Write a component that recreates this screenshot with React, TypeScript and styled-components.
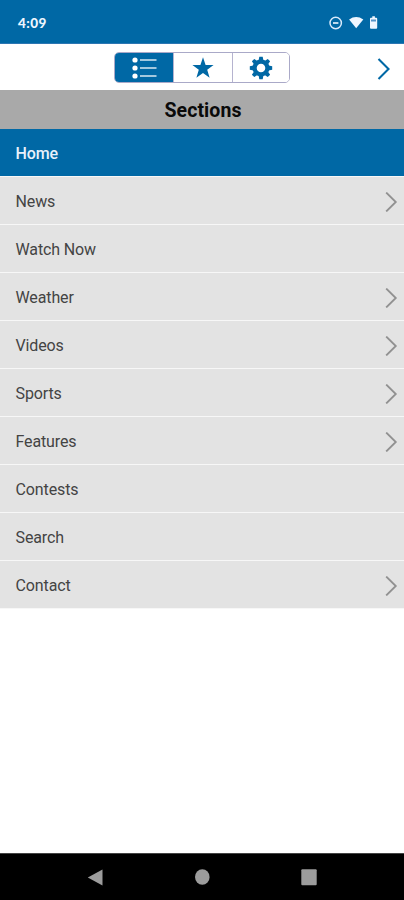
import React from "react";
import styled, { createGlobalStyle, css } from "styled-components";

const BLUE = "#0068a5";

const GlobalStyle = createGlobalStyle`
  *, *::before, *::after { box-sizing: border-box; }
  body { margin: 0; background: #fff; font-family: Roboto, sans-serif; }
  button { font: inherit; border: 0; padding: 0; background: none; }
  svg { display: block; }
`;

const Screen = styled.div`
  display: flex;
  flex-direction: column;
  width: 404px;
  height: 900px;
  background: #fff;
  overflow: hidden;
`;

const StatusBar = styled.header`
  flex: none;
  display: flex;
  align-items: center;
  justify-content: space-between;
  height: 44px;
  padding: 3px 25px 0 18px;
  background: ${BLUE};
  border-bottom: 1px solid #2c76b2;
`;

const Clock = styled.span`
  font: 900 13.5px/16px Lato, sans-serif;
  letter-spacing: 0.45px;
  color: #eef6ff;
`;

const Toolbar = styled.nav`
  flex: none;
  display: grid;
  grid-template-columns: 1fr 176px 1fr;
  align-items: center;
  height: 46px;
`;

const Segments = styled.div`
  grid-column: 2;
  display: grid;
  grid-template-columns: 58px 59px 57px;
  height: 31px;
  border: 1px solid #aaa9c8;
  border-radius: 5px;
  overflow: hidden;
`;

const Segment = styled.button<{ $active?: boolean }>`
  display: flex;
  align-items: center;
  justify-content: center;
  padding-top: 1px;
  color: ${(p) => (p.$active ? "#fff" : BLUE)};
  background: ${(p) => (p.$active ? BLUE : "#fff")};
  & + & { border-left: 1px solid #b5b3cf; }
`;

const NextButton = styled.button`
  justify-self: end;
  margin: 3px 14px 0 0;
  color: ${BLUE};
`;

const Heading = styled.h1`
  flex: none;
  margin: 0;
  height: 39px;
  padding-top: 1px;
  background: #a9a9a9;
  color: #0a0a0a;
  font-size: 19.5px;
  font-weight: 700;
  line-height: 40px;
  letter-spacing: 0.1px;
  text-align: center;
  padding-left: 2px;
`;

const List = styled.ul`
  flex: 1;
  margin: 0;
  padding: 0;
  list-style: none;
`;

const Row = styled.li<{ $active?: boolean }>`
  display: flex;
  align-items: center;
  justify-content: space-between;
  height: 48px;
  padding: 2px 6px 0 15.5px;
  border-bottom: 1px solid #f7f7f7;
  background: #e3e3e3;
  color: #444;
  font-size: 16px;
  letter-spacing: -0.12px;
  ${(p) =>
    p.$active &&
    css`
      background: ${BLUE};
      color: #e8f1fb;
      font-weight: 500;
      letter-spacing: -0.1px;
    `}
`;

const SystemNav = styled.footer`
  flex: none;
  display: flex;
  align-items: center;
  justify-content: space-between;
  height: 47px;
  padding: 0 87px;
  background: #000;
  border-top: 1px solid #444;
  color: #9c9c9c;
`;

const StatusIcons = () => (
  <svg width="50" height="16" viewBox="0 0 50 16" fill="#eef6ff">
    <circle cx="6.7" cy="8" r="5.7" fill="none" stroke="#d8eafb" strokeWidth="1.5" />
    <path d="M4 7.2h5.4v1.6H4z" />
    <path d="M20.1 4.4Q27.2-.4 34.3 4.4L27.2 13.3Z" />
    <path d="M42 2.7h1.3V1.3h2.6v1.4h1.3q1 0 1 1v9q0 1-1 1H42q-1 0-1-1v-9q0-1 1-1Z" />
    <path d="M42 4.5h5v2h-5z" fill="#5795c8" />
  </svg>
);

const ListIcon = () => (
  <svg width="26" height="22" viewBox="0 0 26 22" fill="currentColor">
    {[3, 11, 19].map((y) => (
      <g key={y}>
        <circle cx="4" cy={y} r="2.6" />
        <path d={`M9 ${y - 0.7}h16.5v1.4H9z`} opacity=".85" />
      </g>
    ))}
  </svg>
);

const StarIcon = () => (
  <svg width="22" height="22" viewBox="0 0 22 22" fill="currentColor">
    <path d="M11 .2l2.6 7.7 8 .1-6.4 4.8 2.4 8L11 16l-6.6 4.8 2.4-8L.4 8l8-.1Z" />
  </svg>
);

const GearIcon = () => (
  <svg width="24" height="24" viewBox="-12 -12 24 24" fill="currentColor">
    <circle r="6.4" fill="none" stroke="currentColor" strokeWidth="4.2" />
    {[0, 45, 90, 135, 180, 225, 270, 315].map((angle) => (
      <path key={angle} d="M-2.4-7.6L-1.7-11.2H1.7L2.4-7.6Z" transform={`rotate(${angle})`} />
    ))}
  </svg>
);

const Chevron = ({ large }: { large?: boolean }) =>
  large ? (
    <svg width="13" height="22" viewBox="0 0 13 22" fill="none" stroke="currentColor" strokeWidth="2.1">
      <path d="M1.5 1L11.5 11L1.5 21" />
    </svg>
  ) : (
    <svg width="13" height="20" viewBox="0 0 13 20" fill="none" stroke="#919191" strokeWidth="1.8">
      <path d="M1.2 .5L10.8 10L1.2 19.5" />
    </svg>
  );

const sections = [
  { name: "Home", active: true },
  { name: "News", more: true },
  { name: "Watch Now" },
  { name: "Weather", more: true },
  { name: "Videos", more: true },
  { name: "Sports", more: true },
  { name: "Features", more: true },
  { name: "Contests" },
  { name: "Search" },
  { name: "Contact", more: true },
];

export default function App() {
  return (
    <>
      <GlobalStyle />
      <Screen>
        <StatusBar>
          <Clock>4:09</Clock>
          <StatusIcons />
        </StatusBar>
        <Toolbar>
          <Segments>
            <Segment $active aria-label="Sections"><ListIcon /></Segment>
            <Segment aria-label="Favorites"><StarIcon /></Segment>
            <Segment aria-label="Settings"><GearIcon /></Segment>
          </Segments>
          <NextButton aria-label="Next"><Chevron large /></NextButton>
        </Toolbar>
        <Heading>Sections</Heading>
        <List>
          {sections.map((s) => (
            <Row key={s.name} $active={s.active}>
              <span>{s.name}</span>
              {s.more && <Chevron />}
            </Row>
          ))}
        </List>
        <SystemNav>
          <svg width="16" height="17" viewBox="0 0 16 17" fill="currentColor">
            <path d="M.8 8.5L15.5.5v16Z" />
          </svg>
          <svg width="16" height="17" viewBox="0 0 16 17" fill="currentColor">
            <ellipse cx="8.3" cy="8" rx="7.3" ry="7.8" />
          </svg>
          <svg width="16" height="17" viewBox="0 0 16 17" fill="currentColor">
            <rect x=".3" y=".2" width="15.4" height="16" rx="1" />
          </svg>
        </SystemNav>
      </Screen>
    </>
  );
}
